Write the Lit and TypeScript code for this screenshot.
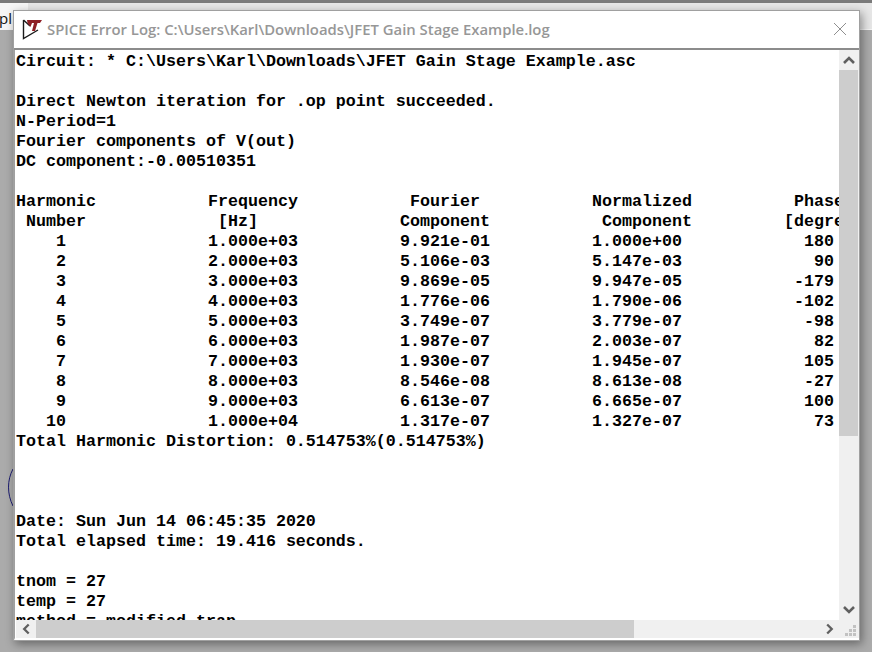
import { LitElement, html, css, svg } from "lit";
import { customElement } from "lit/decorators.js";

const TOP = [
  "Circuit: * C:\\Users\\Karl\\Downloads\\JFET Gain Stage Example.asc",
  "",
  "Direct Newton iteration for .op point succeeded.",
  "N-Period=1",
  "Fourier components of V(out)",
  "DC component:-0.00510351",
  "",
];
const TABLE: string[][] = [
  ["Harmonic", "Frequency", " Fourier", "Normalized", " Phase"],
  [" Number", " [Hz]", "Component", " Component", "[degree]"],
  ["    1", "1.000e+03", "9.921e-01", "1.000e+00", "  180"],
  ["    2", "2.000e+03", "5.106e-03", "5.147e-03", "   90"],
  ["    3", "3.000e+03", "9.869e-05", "9.947e-05", " -179"],
  ["    4", "4.000e+03", "1.776e-06", "1.790e-06", " -102"],
  ["    5", "5.000e+03", "3.749e-07", "3.779e-07", "  -98"],
  ["    6", "6.000e+03", "1.987e-07", "2.003e-07", "   82"],
  ["    7", "7.000e+03", "1.930e-07", "1.945e-07", "  105"],
  ["    8", "8.000e+03", "8.546e-08", "8.613e-08", "  -27"],
  ["    9", "9.000e+03", "6.613e-07", "6.665e-07", "  100"],
  ["   10", "1.000e+04", "1.317e-07", "1.327e-07", "   73"],
];
const BOTTOM = [
  "Total Harmonic Distortion: 0.514753%(0.514753%)",
  "",
  "",
  "",
  "Date: Sun Jun 14 06:45:35 2020",
  "Total elapsed time: 19.416 seconds.",
  "",
  "tnom = 27",
  "temp = 27",
  "method = modified trap",
];

const chevron = (d: string) => html`<svg class="chev" width="20" height="20" viewBox="0 0 20 20">${svg`<path d=${d} fill="none" stroke="#606060" stroke-width="2.6"/>`}</svg>`;

@customElement("app-root")
export class AppRoot extends LitElement {
  static styles = css`
    :host {
      display: block;
      width: 872px;
      height: 652px;
      overflow: hidden;
      position: relative;
    }
    .desktop {
      box-sizing: border-box;
      width: 872px;
      height: 652px;
      background-color: #ababab;
      background-image: radial-gradient(circle at 0.5px 0.5px, #1a1a1a 1px, transparent 1px);
      background-size: 427px 19.9px;
      background-position: 8px 41px;
    }
    .strip {
      position: absolute;
      left: 0;
      top: 0;
      width: 872px;
      height: 30px;
      box-sizing: border-box;
      background: #e6e6e6;
      border-top: 3px solid #7a7a7a;
      border-bottom: 1px solid #f4f4f4;
    }
    .tab {
      width: 28px;
      height: 26px;
      background: #f6f6f6;
      overflow: hidden;
      font: 15px/30px "Open Sans", sans-serif;
      color: #111;
      text-indent: -1px;
    }
    .arc {
      position: absolute;
      left: 6px;
      top: 468px;
    }
    .window {
      position: absolute;
      left: 13px;
      top: 10px;
      width: 847px;
      height: 631px;
      box-sizing: border-box;
      background: #fff;
      border: 1px solid #a0a0a0;
      box-shadow: 2px 3px 9px rgba(0, 0, 0, 0.4);
      display: flex;
      flex-direction: column;
    }
    .title {
      box-sizing: border-box;
      height: 39px;
      flex: none;
      display: flex;
      align-items: center;
      padding: 0 12px 2px 8px;
      gap: 5px;
      border-bottom: 2px solid #8c8c8c;
    }
    .title .text {
      flex: 1;
      font: 600 14.87px "Open Sans", sans-serif;
      color: #979797;
      white-space: nowrap;
    }
    .client {
      flex: 1;
      min-height: 0;
      display: grid;
      grid-template-columns: 823px 20px;
      grid-template-rows: 570px 18px;
      padding-left: 1px;
      border-left: 1px solid #a0a0a0;
      border-bottom: 2px solid #fff;
    }
    .log {
      overflow: hidden;
      padding-top: 2px;
      font: bold 16.67px/20px "Liberation Mono", monospace;
      color: #000;
    }
    .line {
      height: 20px;
      white-space: pre;
    }
    .row {
      display: grid;
      grid-template-columns: repeat(5, 192px);
      height: 20px;
      white-space: pre;
    }
    .vbar {
      background: #f0f0f0;
      display: flex;
      flex-direction: column;
    }
    .vthumb {
      width: 19px;
      height: 366px;
      background: #cdcdcd;
    }
    .vspace {
      flex: 1;
    }
    .hbar {
      background: #f0f0f0;
      display: flex;
      height: 18px;
    }
    .hthumb {
      width: 598px;
      height: 18px;
      background: #cdcdcd;
    }
    .hspace {
      flex: 1;
    }
    .chev {
      display: block;
      flex: none;
    }
    .hbar .chev {
      width: 20px;
      height: 18px;
    }
    .corner {
      background: #f0f0f0;
    }
    .corner svg {
      display: block;
    }
  `;

  render() {
    const grip = [
      [10, 1], [6, 5], [10, 5], [2, 9], [6, 9], [10, 9],
    ];
    return html`
      <div class="desktop">
        <div class="strip"><div class="tab">pl</div></div>
        <svg class="arc" width="10" height="40" viewBox="0 0 10 40">
          <path d="M7 1 C1 12 1 26 7 38" fill="none" stroke="#1c1c70" stroke-width="1"/>
        </svg>
        <div class="window">
          <div class="title">
            <svg width="20" height="22" viewBox="0 0 20 22">
              <path d="M1.5 2 L1.5 20.5 L16 12 M1.5 2 L8 8" fill="none" stroke="#1a1a1a" stroke-width="1.4"/>
              <path d="M5 2 H20 L18 5 H15.5 L13 13 H10 L12 5 H10 L8.5 9 L5.5 5 Z" fill="#8e1f25"/>
            </svg>
            <span class="text">SPICE Error Log: C:\\Users\\Karl\\Downloads\\JFET Gain Stage Example.log</span>
            <svg width="14" height="14" viewBox="0 0 14 14">
              <path d="M1 1 L13 13 M13 1 L1 13" stroke="#8f8f8f" stroke-width="1" fill="none"/>
            </svg>
          </div>
          <div class="client">
            <div class="log">
              ${TOP.map((l) => html`<div class="line">${l}</div>`)}
              ${TABLE.map((r) => html`<div class="row">${r.map((c) => html`<span>${c}</span>`)}</div>`)}
              ${BOTTOM.map((l) => html`<div class="line">${l}</div>`)}
            </div>
            <div class="vbar">
              ${chevron("M5 13 L10 8 L15 13")}
              <div class="vthumb"></div>
              <div class="vspace"></div>
              ${chevron("M5 7 L10 12 L15 7")}
            </div>
            <div class="hbar">
              ${chevron("M13 5 L8 10 L13 15")}
              <div class="hthumb"></div>
              <div class="hspace"></div>
              ${chevron("M8 5 L13 10 L8 15")}
            </div>
            <div class="corner">
              <svg width="20" height="18" viewBox="0 0 20 18">
                ${grip.map(([x, y]) => svg`<rect x=${x + 4} y=${y + 4} width="3" height="3" fill="#c2c2c2"/>`)}
              </svg>
            </div>
          </div>
        </div>
      </div>
    `;
  }
}
